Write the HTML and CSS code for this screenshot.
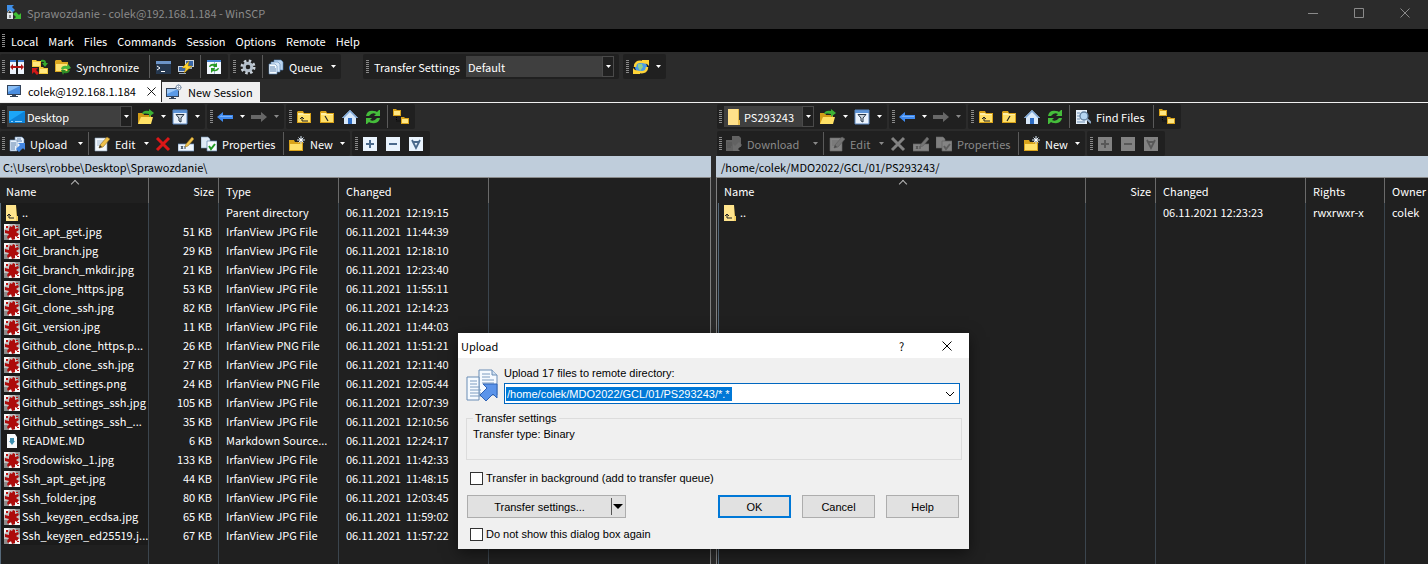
FILE: index.html
```html
<!DOCTYPE html>
<html lang="en">
<head>
<meta charset="utf-8">
<title>Sprawozdanie - colek@192.168.1.184 - WinSCP</title>
<link rel="stylesheet" href="styles.css">
</head>
<body>
<svg class="sprite" aria-hidden="true">
  <symbol id="app" viewBox="0 0 16 16"><path d="M1 1h7L6 3l3 3-3 3-3-3-2 2z" fill="#3f8fe8"/><path d="M15 15H8l2-2-3-3 3-2 3 3 2-2z" fill="#3fbf35"/><path d="M2 9V8q2-3 4 0v1" fill="none" stroke="#ccc"/><path d="M1 9h6v6H1z" fill="#dfe5ea"/><path d="M3.500 11h1v3h-1z" fill="#333"/></symbol>
  <symbol id="compare" viewBox="0 0 16 16"><path d="M1 1h6v14H1zM9 1h6v14H9z" fill="#eef5fd"/><path d="M1 1h6v2H1zM9 1h6v2H9z" fill="#3a76c8"/><path d="M1 8l3-3v2h8V5l3 3-3 3V9H4v2z" fill="#b31616"/></symbol>
  <symbol id="folder" viewBox="0 0 16 16"><path d="M1 3l1-1h5l1 2h7v10H1z" fill="#d9a31a"/><path d="M2 6h12v7H2z" fill="#ffe069"/><path d="M2 4h5l1 1h6v1H2z" fill="#fff0a8"/></symbol>
  <symbol id="syncdirs" viewBox="0 0 16 16"><path d="M0 1h4l1 1h4v6H0z" fill="#f3c93b"/><path d="M1 3h7v4H1z" fill="#ffe77e"/><path d="M7 8h4l1 1h4v6H7z" fill="#f3c93b"/><path d="M8 10h7v4H8z" fill="#ffe77e"/><path d="M9 1q5-1 5 3h2l-3 4-3-4h2q0-2-3-1z" fill="#35a82c"/><path d="M0 9h6L4 11l3 3-2 2-3-3-2 2z" fill="#d01818"/></symbol>
  <symbol id="sync" viewBox="0 0 16 16"><path d="M0 2l1-1h5l1 2h6v10H0z" fill="#dba71f"/><path d="M1 5h11v7H1z" fill="#ffe374"/><path d="M6 10q1-4 6-3l1-2 3 4-4 2v-1q-3-1-4 1z" fill="#49b53c"/><path d="M15 11q-1 4-6 3l-1 2-2-5h5l-1 1q2 1 3-1z" fill="#2c8c27"/></symbol>
  <symbol id="terminal" viewBox="0 0 16 16"><path d="M1 2h15v13H1z" fill="#26384f"/><path d="M1 2h15v3H1z" fill="#6c94c8"/><path d="M2 7l3 2-3 2" fill="none" stroke="#fff"/><path d="M6 12h4v1H6z" fill="#fff"/></symbol>
  <symbol id="putty" viewBox="0 0 16 16"><path d="M7 1h9v7H7zM0 7h8v6H0z" fill="#cbd5df"/><path d="M8 2h7v5H8zM1 8h6v4H1z" fill="#3867aa"/><path d="M1 14h7v1H1zM11 8h3v2h-3z" fill="#9aa8b6"/><path d="M11 2L4 9h4l-2 5 8-7h-4z" fill="#ffd52e" stroke="#a87900" stroke-width=".5"/></symbol>
  <symbol id="swap" viewBox="0 0 16 16"><path d="M1 1h14v14H1z" fill="#f2f8ff"/><path d="M1 1h14v2H1z" fill="#4583cf"/><path d="M8 3h1v12H8z" fill="#9fb5cf"/><path d="M3 8q1-4 6-3l2-1v4H7l1-1q-2-1-4 1zM13 9q-1 4-6 3l-2 2v-5h4l-1 2q2 0 4-2z" fill="#299b24"/></symbol>
  <symbol id="gear" viewBox="0 0 16 16"><circle cx="8" cy="8" r="6" fill="none" stroke="#c9d1d9" stroke-width="3" stroke-dasharray="2.400 2.312"/><circle cx="8" cy="8" r="3.800" fill="none" stroke="#b5c0cb" stroke-width="3"/></symbol>
  <symbol id="queue" viewBox="0 0 16 16"><path d="M6 1h7l2 2v8H6z" fill="#bcd4ee" stroke="#5684b5" stroke-width=".6"/><path d="M3 3h7l2 2v8H3z" fill="#d7e7f8" stroke="#5684b5" stroke-width=".6"/><path d="M1 5h6l2 2v8H1z" fill="#f6fbff" stroke="#5684b5" stroke-width=".6"/><path d="M2 8h5M2 10h6M2 12h6" stroke="#5a82b0"/></symbol>
  <symbol id="globe" viewBox="0 0 16 16"><circle cx="8" cy="8" r="6" fill="#4b9be6"/><path d="M5 5l4 0 1 3-3 4-2-4z" fill="#8fd08a"/><path d="M2 8Q2 2 9 3" fill="none" stroke="#ffd437" stroke-width="2.500"/><path d="M9 1h7v6l-2-2-5-1z" fill="#ffd437"/><path d="M14 8q0 6-7 5" fill="none" stroke="#ffd437" stroke-width="2.500"/><path d="M7 15H0V9l2 2 5 1z" fill="#ffd437"/></symbol>
  <symbol id="monitor" viewBox="0 0 16 16"><path d="M1 2h14v10H1z" fill="#33435a"/><path d="M2 3h12v8H2z" fill="#4b8ee0"/><path d="M2 3h12L2 9z" fill="#8abef5"/><path d="M6 12h4v1h2v1H4v-1h2z" fill="#33435a"/></symbol>
  <symbol id="newsession" viewBox="0 0 16 16"><path d="M0 4h13v9H0z" fill="#33435a"/><path d="M1 5h11v7H1z" fill="#5b9ae6"/><path d="M1 5h11L1 10z" fill="#9cc8f7"/><path d="M5 13h3v1h2v1H3v-1h2z" fill="#33435a"/><circle cx="12.500" cy="3.500" r="2.500" fill="#fff" stroke="#7b8ea5"/><path d="M12.500 0v7M9 3.500h7" stroke="#90a2b8" stroke-width=".7"/></symbol>
  <symbol id="desktop" viewBox="0 0 16 16"><path d="M0 2h16v12H0z" fill="#0d83d8"/><path d="M0 2h16L0 12z" fill="#1ca6f7"/><path d="M2 12.500h2m2 0h7" stroke="#8fd4ff"/></symbol>
  <symbol id="open" viewBox="0 0 16 16"><path d="M0 4h5l1 2h7v9H0z" fill="#d29c17"/><path d="M3 8h12l-2 7H0z" fill="#ffe165"/><path d="M4 5q1-4 7-3V0l5 4-5 4V5Q7 4 4 5z" fill="#3db236"/></symbol>
  <symbol id="filter" viewBox="0 0 16 16"><path d="M1 1h14v14H1z" fill="#e9f2fd"/><path d="M1 1h14v3H1z" fill="#5b93d8"/><path d="M1 1h14v14H1z" fill="none" stroke="#5b87c0"/><path d="M4 5.500h8L9 9v4l-2-1V9z" fill="#cdd6e0" stroke="#273647"/></symbol>
  <symbol id="back" viewBox="0 0 16 16"><path d="M0 8l6-5v3h10v4H6v3z" fill="#3f8af0"/><path d="M2 8l3-2v1h10v1z" fill="#79b2fa"/></symbol>
  <symbol id="forward" viewBox="0 0 16 16"><path d="M16 8l-6-5v3H0v4h10v3z" fill="#999"/></symbol>
  <symbol id="folderup" viewBox="0 0 16 16"><use href="#folder"/><path d="M12 12H6V8m-2 2l2-2 2 2" fill="none" stroke="#222"/></symbol>
  <symbol id="rootback" viewBox="0 0 16 16"><use href="#folder"/><path d="M6 7l3 5" fill="none" stroke="#222" stroke-width="1.200"/></symbol>
  <symbol id="rootslash" viewBox="0 0 16 16"><use href="#folder"/><path d="M9 7l-3 5" fill="none" stroke="#222" stroke-width="1.200"/></symbol>
  <symbol id="home" viewBox="0 0 16 16"><path d="M8 1l8 8h-2v6H2V9H0z" fill="#d9e9fa"/><path d="M8 1l8 8h-2L8 3 2 9H0z" fill="#7fa9d9"/><path d="M6 9h4v6H6z" fill="#2d6cc4"/></symbol>
  <symbol id="refresh" viewBox="0 0 16 16"><path d="M1 7Q2 1 9 2q2 0 3 1l2-2h1v6H9l2-2Q7 3 4 7zM15 9q-1 6-8 5-2 0-3-1l-2 2H1V9h6l-2 2q4 2 7-2z" fill="#45bd3b"/></symbol>
  <symbol id="tree" viewBox="0 0 16 16"><path d="M0 0h3l1 1h4v6H0zM8 8h3l1 1h4v6H8z" fill="#d9a31a"/><path d="M1 2h6v4H1zM9 10h6v4H9z" fill="#ffe783"/><path d="M3.500 8v4H8" fill="none" stroke="#000" stroke-dasharray="1 1"/></symbol>
  <symbol id="upload" viewBox="0 0 16 16"><path d="M6 1h7l2 2v9H6z" fill="#eaf3fd" stroke="#6b8db5" stroke-width=".6"/><path d="M1 4h7v11H1z" fill="#eaf3fd" stroke="#6b8db5" stroke-width=".6"/><path d="M8 3h4M8 5h5M2 7h5M2 9h5M2 11h4M2 13h4" stroke="#5b7fa9"/><path d="M9 7h7v7l-2-2-4 4-3-3 4-4z" fill="#4285df"/></symbol>
  <symbol id="download" viewBox="0 0 16 16"><path d="M6 0h7l2 2v9H6zM0 4h8v11H0z" fill="#888"/><path d="M1 7h5M1 9h5M1 11h4" stroke="#555"/><path d="M7 15V8l2 2 4-4 3 3-4 4 2 2z" fill="#aaa"/></symbol>
  <symbol id="edit" viewBox="0 0 16 16"><path d="M1 2h12v13H1z" fill="#f3f8fd" stroke="#8ca2b9" stroke-width=".6"/><path d="M3 5h7M3 7h6M3 9h5" stroke="#a9bcd0"/><path d="M5 12l1-3 7-8 3 2-7 8z" fill="#f0c24b" stroke="#8d6a1c" stroke-width=".6"/><path d="M5 12l1-3 2 2z" fill="#333"/></symbol>
  <symbol id="delete" viewBox="0 0 16 16"><path d="M2 2l12 12M14 2L2 14" stroke="#dc1717" stroke-width="3"/></symbol>
  <symbol id="rename" viewBox="0 0 16 16"><path d="M0 8h16v7H0z" fill="#eef5fc" stroke="#6d94c0" stroke-width=".7"/><path d="M3 10l2 3m0-3l-2 3M7 10v3" stroke="#345"/><path d="M7 11l1-3 6-7 2 2-6 7z" fill="#f0c24b" stroke="#8d6a1c" stroke-width=".5"/></symbol>
  <symbol id="props" viewBox="0 0 16 16"><path d="M0 1h7l2 2v9H0z" fill="#dfeaf6" stroke="#7490b0" stroke-width=".6"/><path d="M6 5h10v10H6z" fill="#f6fafe" stroke="#5f83ad" stroke-width=".7"/><path d="M8 10l2 3 4-5" fill="none" stroke="#1f9a22" stroke-width="2"/></symbol>
  <symbol id="newfolder" viewBox="0 0 16 16"><path d="M0 4h5l1 2h8v9H0z" fill="#d9a31a"/><path d="M1 8h12v6H1z" fill="#ffe069"/><path d="M12 0v8M8 4h8M9.500 1.500l5 5m0-5l-5 5" stroke="#d8e7f7"/><circle cx="12" cy="4" r="1.500" fill="#fff"/></symbol>
  <symbol id="plus" viewBox="0 0 16 16"><path d="M1 1h14v14H1z" fill="#e9f3fd"/><path d="M8 4v8M4 8h8" stroke="#4b6a8c" stroke-width="2"/></symbol>
  <symbol id="minus" viewBox="0 0 16 16"><path d="M1 1h14v14H1z" fill="#e9f3fd"/><path d="M4 8h8" stroke="#4b6a8c" stroke-width="2"/></symbol>
  <symbol id="all" viewBox="0 0 16 16"><path d="M1 1h14v14H1z" fill="#e9f3fd"/><path d="M4 4l4 8 4-8M5 6h6" fill="none" stroke="#4b6a8c" stroke-width="1.800"/></symbol>
  <symbol id="find" viewBox="0 0 16 16"><path d="M1 1h11v14H1z" fill="#e6f0fa"/><path d="M2 4h3M2 7h3M2 10h3M2 13h8" stroke="#6f8fb2"/><circle cx="9" cy="7" r="4" fill="#b5d6f2" stroke="#5f7f9f" stroke-width="1.300"/><path d="M12 10l4 4" stroke="#8fa9c4" stroke-width="2"/></symbol>
  <symbol id="dirup" viewBox="0 0 16 16"><path d="M2 0h10l1 11h1v5H2z" fill="#f5d063"/><path d="M2 0h10v16H2z" fill="#ffe48c"/><path d="M10 13H5V9m-2 2l2-2 2 2" fill="none" stroke="#222"/></symbol>
  <symbol id="dir" viewBox="0 0 16 16"><path d="M2 0h11v11h1v5H2z" fill="#e8bd4d"/><path d="M2 0h10v16H2z" fill="#ffe08a"/></symbol>
  <symbol id="irfan" viewBox="0 0 16 16"><path d="M0 0h16v16H0z" fill="#c4c4c4"/><path d="M0 0h6L0 6zM11 11h5v5h-5zM4 14h4v2H4z" fill="#f6f6f6"/><path d="M11 0h5v7l-2-3zM0 11h4l1 5H0z" fill="#8d8d8d"/><path d="M6 2l2 1 1-2 2 1v3l3-1 1 2-3 2 3 2-2 3-2-1v3l-3 1-1-3-3 2-1-2 2-3-4-1V6l4 1V5z" fill="#ad0b0b"/><path d="M2 2l2 0 0 2-2 0zM13 13h2v1h-2zM12 2h2v1h-2z" fill="#b11"/></symbol>
  <symbol id="md" viewBox="0 0 16 16"><path d="M3 1h8l2 3v11H3z" fill="#f7fafc"/><path d="M6 5h4v3h1l-3 4-3-4h1z" fill="#3d8fb0"/></symbol>
  <symbol id="upload-lg" viewBox="0 0 32 32"><path d="M13 1h13l5 5v20H13z" fill="#f5faff" stroke="#6b8db5"/><path d="M26 1v5h5" fill="#cfe0f2" stroke="#6b8db5"/><path d="M1 8h12v23H1z" fill="#f5faff" stroke="#6b8db5"/><path d="M16 5h8M16 8h8M16 11h12M16 14h12M4 12h7M4 15h7M4 18h10M4 21h11M4 24h11M4 27h11" stroke="#7d9cc0"/><path d="M17 15h14v14l-4-4-7 7-6-6 7-7z" fill="#5b94ea" stroke="#2e62b5"/></symbol>
  <symbol id="x" viewBox="0 0 10 10"><path d="M.5.5l9 9m0-9l-9 9" fill="none" stroke="currentColor"/></symbol>
  <symbol id="min" viewBox="0 0 10 10"><path d="M0 5.500h10" stroke="currentColor"/></symbol>
  <symbol id="max" viewBox="0 0 10 10"><path d="M.5.5h9v9h-9z" fill="none" stroke="currentColor"/></symbol>
  <symbol id="chev" viewBox="0 0 10 10"><path d="M1 3l4 4 4-4" fill="none" stroke="currentColor"/></symbol>
</svg>

<header class="titlebar">
  <svg class="icon"><use href="#app"/></svg>
  <h1 class="titlebar-text">Sprawozdanie - colek@192.168.1.184 - WinSCP</h1>
  <button class="winbtn" aria-label="Minimize"><svg><use href="#min"/></svg></button>
  <button class="winbtn" aria-label="Maximize"><svg><use href="#max"/></svg></button>
  <button class="winbtn" aria-label="Close"><svg><use href="#x"/></svg></button>
</header>

<nav class="menubar">
  <span class="grip"></span>
  <button>Local</button><button>Mark</button><button>Files</button><button>Commands</button><button>Session</button><button>Options</button><button>Remote</button><button>Help</button>
</nav>

<div class="bar bar-main">
  <div class="group">
    <span class="grip"></span>
    <button class="tool" aria-label="Compare"><svg class="icon"><use href="#compare"/></svg></button>
    <button class="tool" aria-label="Synchronize browsing"><svg class="icon"><use href="#syncdirs"/></svg></button>
    <button class="tool w-sync"><svg class="icon"><use href="#sync"/></svg><span>Synchronize</span></button>
    <span class="sep"></span>
    <button class="tool" aria-label="Terminal"><svg class="icon"><use href="#terminal"/></svg></button>
    <button class="tool" aria-label="PuTTY"><svg class="icon"><use href="#putty"/></svg></button>
    <span class="sep"></span>
    <button class="tool" aria-label="Refresh panels"><svg class="icon"><use href="#swap"/></svg></button>
  </div>
  <div class="group">
    <span class="grip"></span>
    <button class="tool" aria-label="Preferences"><svg class="icon"><use href="#gear"/></svg></button>
    <span class="sep"></span>
    <button class="tool w-queue"><svg class="icon"><use href="#queue"/></svg><span>Queue</span><i class="caret"></i></button>
  </div>
  <div class="group group-transfer">
    <span class="grip"></span>
    <label class="bar-label" for="preset">Transfer Settings</label>
    <span class="combo combo-preset"><select id="preset"><option>Default</option></select><i class="combo-arrow"></i></span>
  </div>
  <div class="group">
    <span class="grip"></span>
    <button class="tool" aria-label="Session refresh"><svg class="icon"><use href="#globe"/></svg><i class="caret"></i></button>
  </div>
</div>

<div class="tabs">
  <div class="tab tab-active"><svg class="icon"><use href="#monitor"/></svg><span>colek@192.168.1.184</span><button class="tab-close" aria-label="Close tab"><svg><use href="#x"/></svg></button></div>
  <button class="tab tab-new"><svg class="icon"><use href="#newsession"/></svg><span>New Session</span></button>
</div>

<main class="panes">
  <section class="pane">
    <div class="bars">
      <div class="bar">
        <div class="group">
          <span class="grip"></span>
          <span class="combo combo-local"><svg class="icon"><use href="#desktop"/></svg><select aria-label="Local drive"><option>Desktop</option></select><i class="combo-arrow"></i></span>
          <button class="tool" aria-label="Open directory"><svg class="icon"><use href="#open"/></svg><i class="caret"></i></button>
          <button class="tool" aria-label="Filter"><svg class="icon"><use href="#filter"/></svg><i class="caret"></i></button>
        </div>
        <div class="group">
          <span class="grip"></span>
          <button class="tool" aria-label="Back"><svg class="icon"><use href="#back"/></svg><i class="caret"></i></button>
          <button class="tool off" aria-label="Forward"><svg class="icon"><use href="#forward"/></svg><i class="caret"></i></button>
        </div>
        <div class="group">
          <span class="grip"></span>
          <button class="tool" aria-label="Parent directory"><svg class="icon"><use href="#folderup"/></svg></button>
          <button class="tool" aria-label="Root directory"><svg class="icon"><use href="#rootback"/></svg></button>
          <button class="tool" aria-label="Home directory"><svg class="icon"><use href="#home"/></svg></button>
          <button class="tool" aria-label="Refresh"><svg class="icon"><use href="#refresh"/></svg></button>
          <span class="sep"></span>
          <button class="tool" aria-label="Tree"><svg class="icon"><use href="#tree"/></svg></button>
        </div>
      </div>
      <div class="bar">
        <div class="group">
          <span class="grip"></span>
          <button class="tool w-upload"><svg class="icon"><use href="#upload"/></svg><span>Upload</span><i class="caret"></i></button>
          <span class="sep"></span>
          <button class="tool w-edit"><svg class="icon"><use href="#edit"/></svg><span>Edit</span><i class="caret"></i></button>
          <button class="tool" aria-label="Delete"><svg class="icon"><use href="#delete"/></svg></button>
          <button class="tool" aria-label="Rename"><svg class="icon"><use href="#rename"/></svg></button>
          <button class="tool w-props"><svg class="icon"><use href="#props"/></svg><span>Properties</span></button>
          <span class="sep"></span>
          <button class="tool w-new"><svg class="icon"><use href="#newfolder"/></svg><span>New</span><i class="caret"></i></button>
        </div>
        <div class="group">
          <span class="grip"></span>
          <button class="tool" aria-label="Select"><svg class="icon"><use href="#plus"/></svg></button>
          <button class="tool" aria-label="Unselect"><svg class="icon"><use href="#minus"/></svg></button>
          <button class="tool" aria-label="Select all"><svg class="icon"><use href="#all"/></svg></button>
        </div>
      </div>
    </div>
    <div class="path">C:\Users\robbe\Desktop\Sprawozdanie\</div>
    <div class="list">
      <table class="files files-local">
        <colgroup><col class="c-name"><col class="c-size"><col class="c-type"><col class="c-date"><col></colgroup>
        <thead><tr><th class="sorted">Name</th><th class="num">Size</th><th>Type</th><th>Changed</th><th class="rest"></th></tr></thead>
        <tbody>
          <tr><td><svg class="icon"><use href="#dirup"/></svg>..</td><td></td><td>Parent directory</td><td>06.11.2021  12:19:15</td><td></td></tr>
          <tr><td><svg class="icon"><use href="#irfan"/></svg>Git_apt_get.jpg</td><td>51 KB</td><td>IrfanView JPG File</td><td>06.11.2021  11:44:39</td><td></td></tr>
          <tr><td><svg class="icon"><use href="#irfan"/></svg>Git_branch.jpg</td><td>29 KB</td><td>IrfanView JPG File</td><td>06.11.2021  12:18:10</td><td></td></tr>
          <tr><td><svg class="icon"><use href="#irfan"/></svg>Git_branch_mkdir.jpg</td><td>21 KB</td><td>IrfanView JPG File</td><td>06.11.2021  12:23:40</td><td></td></tr>
          <tr><td><svg class="icon"><use href="#irfan"/></svg>Git_clone_https.jpg</td><td>53 KB</td><td>IrfanView JPG File</td><td>06.11.2021  11:55:11</td><td></td></tr>
          <tr><td><svg class="icon"><use href="#irfan"/></svg>Git_clone_ssh.jpg</td><td>82 KB</td><td>IrfanView JPG File</td><td>06.11.2021  12:14:23</td><td></td></tr>
          <tr><td><svg class="icon"><use href="#irfan"/></svg>Git_version.jpg</td><td>11 KB</td><td>IrfanView JPG File</td><td>06.11.2021  11:44:03</td><td></td></tr>
          <tr><td><svg class="icon"><use href="#irfan"/></svg>Github_clone_https.p...</td><td>26 KB</td><td>IrfanView PNG File</td><td>06.11.2021  11:51:21</td><td></td></tr>
          <tr><td><svg class="icon"><use href="#irfan"/></svg>Github_clone_ssh.jpg</td><td>27 KB</td><td>IrfanView JPG File</td><td>06.11.2021  12:11:40</td><td></td></tr>
          <tr><td><svg class="icon"><use href="#irfan"/></svg>Github_settings.png</td><td>24 KB</td><td>IrfanView PNG File</td><td>06.11.2021  12:05:44</td><td></td></tr>
          <tr><td><svg class="icon"><use href="#irfan"/></svg>Github_settings_ssh.jpg</td><td>105 KB</td><td>IrfanView JPG File</td><td>06.11.2021  12:07:39</td><td></td></tr>
          <tr><td><svg class="icon"><use href="#irfan"/></svg>Github_settings_ssh_...</td><td>35 KB</td><td>IrfanView JPG File</td><td>06.11.2021  12:10:56</td><td></td></tr>
          <tr><td><svg class="icon"><use href="#md"/></svg>README.MD</td><td>6 KB</td><td>Markdown Source...</td><td>06.11.2021  12:24:17</td><td></td></tr>
          <tr><td><svg class="icon"><use href="#irfan"/></svg>Srodowisko_1.jpg</td><td>133 KB</td><td>IrfanView JPG File</td><td>06.11.2021  11:42:33</td><td></td></tr>
          <tr><td><svg class="icon"><use href="#irfan"/></svg>Ssh_apt_get.jpg</td><td>44 KB</td><td>IrfanView JPG File</td><td>06.11.2021  11:48:15</td><td></td></tr>
          <tr><td><svg class="icon"><use href="#irfan"/></svg>Ssh_folder.jpg</td><td>80 KB</td><td>IrfanView JPG File</td><td>06.11.2021  12:03:45</td><td></td></tr>
          <tr><td><svg class="icon"><use href="#irfan"/></svg>Ssh_keygen_ecdsa.jpg</td><td>65 KB</td><td>IrfanView JPG File</td><td>06.11.2021  11:59:02</td><td></td></tr>
          <tr><td><svg class="icon"><use href="#irfan"/></svg>Ssh_keygen_ed25519.j...</td><td>67 KB</td><td>IrfanView JPG File</td><td>06.11.2021  11:57:22</td><td></td></tr>
          <tr class="filler"><td></td><td></td><td></td><td></td><td></td></tr>
        </tbody>
      </table>
    </div>
  </section>

  <section class="pane">
    <div class="bars">
      <div class="bar">
        <div class="group">
          <span class="grip"></span>
          <span class="combo combo-remote"><svg class="icon"><use href="#dir"/></svg><select aria-label="Remote directory"><option>PS293243</option></select><i class="combo-arrow"></i></span>
          <button class="tool" aria-label="Open directory"><svg class="icon"><use href="#open"/></svg><i class="caret"></i></button>
          <button class="tool" aria-label="Filter"><svg class="icon"><use href="#filter"/></svg><i class="caret"></i></button>
        </div>
        <div class="group">
          <span class="grip"></span>
          <button class="tool" aria-label="Back"><svg class="icon"><use href="#back"/></svg><i class="caret"></i></button>
          <button class="tool off" aria-label="Forward"><svg class="icon"><use href="#forward"/></svg><i class="caret"></i></button>
        </div>
        <div class="group">
          <span class="grip"></span>
          <button class="tool" aria-label="Parent directory"><svg class="icon"><use href="#folderup"/></svg></button>
          <button class="tool" aria-label="Root directory"><svg class="icon"><use href="#rootslash"/></svg></button>
          <button class="tool" aria-label="Home directory"><svg class="icon"><use href="#home"/></svg></button>
          <button class="tool" aria-label="Refresh"><svg class="icon"><use href="#refresh"/></svg></button>
          <span class="sep"></span>
          <button class="tool w-find"><svg class="icon"><use href="#find"/></svg><span>Find Files</span></button>
          <span class="sep"></span>
          <button class="tool" aria-label="Tree"><svg class="icon"><use href="#tree"/></svg></button>
        </div>
      </div>
      <div class="bar">
        <div class="group">
          <span class="grip"></span>
          <button class="tool off w-download"><svg class="icon"><use href="#download"/></svg><span>Download</span><i class="caret"></i></button>
          <span class="sep"></span>
          <button class="tool off w-edit"><svg class="icon"><use href="#edit"/></svg><span>Edit</span><i class="caret"></i></button>
          <button class="tool off" aria-label="Delete"><svg class="icon icon-delete-off"><use href="#delete"/></svg></button>
          <button class="tool off" aria-label="Rename"><svg class="icon"><use href="#rename"/></svg></button>
          <button class="tool off w-props"><svg class="icon"><use href="#props"/></svg><span>Properties</span></button>
          <span class="sep"></span>
          <button class="tool w-new"><svg class="icon"><use href="#newfolder"/></svg><span>New</span><i class="caret"></i></button>
        </div>
        <div class="group">
          <span class="grip"></span>
          <button class="tool off" aria-label="Select"><svg class="icon"><use href="#plus"/></svg></button>
          <button class="tool off" aria-label="Unselect"><svg class="icon"><use href="#minus"/></svg></button>
          <button class="tool off" aria-label="Select all"><svg class="icon"><use href="#all"/></svg></button>
        </div>
      </div>
    </div>
    <div class="path">/home/colek/MDO2022/GCL/01/PS293243/</div>
    <div class="list">
      <table class="files">
        <colgroup><col class="c-name-remote"><col class="c-size"><col class="c-date"><col class="c-rights"><col></colgroup>
        <thead><tr><th class="sorted">Name</th><th class="num">Size</th><th>Changed</th><th>Rights</th><th class="rest">Owner</th></tr></thead>
        <tbody>
          <tr><td><svg class="icon"><use href="#dirup"/></svg>..</td><td></td><td>06.11.2021 12:23:23</td><td>rwxrwxr-x</td><td>colek</td></tr>
          <tr class="filler"><td></td><td></td><td></td><td></td><td></td></tr>
        </tbody>
      </table>
    </div>
  </section>
</main>

<div class="dialog" role="dialog" aria-labelledby="dlg-title">
  <div class="dialog-title"><h2 id="dlg-title">Upload</h2><button class="dialog-btn" aria-label="Context help">?</button><button class="dialog-btn" aria-label="Close"><svg><use href="#x"/></svg></button></div>
  <form class="dialog-body">
    <div class="target">
      <svg class="icon-lg"><use href="#upload-lg"/></svg>
      <div class="target-field">
        <label for="target">Upload 17 files to remote directory:</label>
        <div class="editbox"><input id="target" type="text" value="/home/colek/MDO2022/GCL/01/PS293243/*.*"><button type="button" aria-label="History"><svg><use href="#chev"/></svg></button></div>
      </div>
    </div>
    <fieldset class="settings"><legend>Transfer settings</legend>Transfer type: Binary</fieldset>
    <label class="check"><input type="checkbox">Transfer in background (add to transfer queue)</label>
    <div class="actions">
      <button type="button" class="btn btn-split"><span>Transfer settings...</span><i class="split-arrow"></i></button>
      <button type="button" class="btn btn-default">OK</button>
      <button type="button" class="btn">Cancel</button>
      <button type="button" class="btn">Help</button>
    </div>
    <label class="check"><input type="checkbox">Do not show this dialog box again</label>
  </form>
</div>
</body>
</html>
```
FILE: styles.css
```css
* { box-sizing: border-box; }

body {
  margin: 0;
  height: 100vh;
  display: flex;
  flex-direction: column;
  overflow: hidden;
  position: relative;
  background: #2b2b2b;
  color: #fff;
  font: 11px/16px "Noto Sans CJK SC", "Noto Sans", sans-serif;
}

button, select, input { font: inherit; color: inherit; }
button { background: none; border: 0; padding: 0; }
h1, h2 { margin: 0; font: inherit; }
.sprite { display: none; }
.icon { width: 16px; height: 16px; flex: none; }

/* Title bar */
.titlebar { height: 29px; flex: none; display: flex; align-items: flex-start; color: #8a8a8a; padding-left: 6px; }
.titlebar .icon { margin-top: 4px; }
.titlebar-text { flex: 1; padding: 5px; }
.winbtn { width: 46px; height: 25px; }
.winbtn svg, .dialog-btn svg { width: 10px; height: 10px; display: block; margin: auto; }

/* Menu */
.menubar { height: 23px; flex: none; display: flex; align-items: center; background: #000; }
.menubar button { padding: 0 5px; }

/* Toolbars */
.bar { display: flex; gap: 2px; height: 25px; }
.bar-main { flex: none; height: 28px; padding: 2px 0 1px; }
.bars { display: flex; flex-direction: column; gap: 2px; padding: 1px 0 0; }
.pane + .pane .bars { padding-left: 1px; }
.group { display: flex; align-items: center; background: #202020; border-radius: 2px; padding-right: 2px; }
.group-transfer { margin: 0 2px 0 20px; }
.grip {
  width: 3px;
  height: 14px;
  margin: 0 1px 0 2px;
  flex: none;
  background: repeating-linear-gradient(#8a8a8a 0 1px, transparent 1px 2px);
}
.group + .group .grip { margin-left: 3px; }
.sep { width: 1px; height: 23px; margin: 0 2px; background: #5a5a5a; }
.tool { display: flex; align-items: center; height: 23px; padding-left: 3px; white-space: nowrap; }
.tool .icon { margin-right: 4px; }
.tool span { padding-left: 1px; flex: 1; text-align: left; }
.caret, .combo-arrow::after {
  width: 5px;
  height: 3px;
  margin: 0 3px;
  flex: none;
  background: currentColor;
  clip-path: polygon(0 0, 100% 0, 50% 100%);
}
.off { color: #8a8a8a; }
.off .icon { filter: grayscale(1) contrast(.4) brightness(.75); }
.off .icon-delete-off { filter: grayscale(1) brightness(2); }

.w-sync { width: 95px; }
.w-queue { width: 74px; }
.w-upload { width: 80px; }
.w-download { width: 98px; }
.w-edit { width: 61px; }
.w-props { width: 83px; }
.w-new { width: 62px; }
.w-find { width: 79px; }

.bar-label { padding: 0 5px 0 4px; }
.combo { display: flex; align-items: center; height: 21px; background: #3f3f3f; padding-left: 2px; margin: 0 3px 0 1px; }
.combo select {
  flex: 1;
  min-width: 0;
  height: 21px;
  padding: 0 0 0 2px;
  border: 0;
  background: none;
  appearance: none;
}
.combo-preset select { padding: 0; }
.combo-arrow { display: flex; align-items: center; width: 12px; height: 21px; background: #202020; border: 1px solid #4a4a4a; }
.combo-arrow::after { content: ""; }
.combo-preset { width: 148px; }
.combo-local { width: 125px; }
.combo-remote { width: 90px; }

/* Session tabs */
.tabs { height: 23px; flex: none; display: flex; align-items: flex-end; border-bottom: 1px solid #f0f0f0; color: #000; gap: 1px; }
.tab { display: flex; align-items: center; height: 20px; }
.tab-active { width: 161px; height: 22px; padding-left: 6px; background: #fff; gap: 6px; }
.tab-active span { flex: 1; }
.tab-close { width: 25px; height: 20px; }
.tab-close svg { width: 9px; height: 9px; display: block; margin: auto; }
.tab-new { width: 98px; padding-left: 4px; background: #f0f0f0; gap: 6px; }

/* Panes */
.panes { flex: 1; min-height: 0; display: grid; grid-template-columns: calc(50% - 3px) minmax(0, 1fr); column-gap: 5px; }
.pane { display: flex; flex-direction: column; min-width: 0; min-height: 0; }
.path { height: 22px; flex: none; padding: 3px 3px 0; background: #bfcddb; color: #000; border-bottom: 1px solid #8a8a8a; }
.pane + .pane .path { padding-left: 5px; }
.list { flex: 1; min-height: 0; background: #202020; border-right: 1px solid #808080; }
.pane + .pane .list { border-right: 0; border-left: 1px solid #808080; padding-left: 1px; }
.files { width: 100%; height: 100%; table-layout: fixed; border-collapse: separate; border-spacing: 0; }
.files th {
  position: relative;
  height: 25px;
  padding: 0 7px;
  border-right: 1px solid #6a6a6a;
  font-weight: 400;
  text-align: left;
}
.files th:first-child { padding-left: 6px; }
.files th.num { text-align: right; padding-right: 4px; }
.files th.rest { border-right: 0; }
.sorted::before {
  content: "";
  position: absolute;
  top: 3px;
  left: calc(50% - 2px);
  width: 5px;
  height: 5px;
  border: solid #b5b5b5;
  border-width: 1px 0 0 1px;
  transform: rotate(45deg);
}
.files td {
  height: 19px;
  padding: 0 6px 0 7px;
  border-right: 1px solid #3b454e;
  line-height: 19px;
  white-space: pre;
  overflow: hidden;
}
.files td:first-child { padding: 0 0 0 3px; border-left: 1px solid #56697a; }
.files td:last-child { border-right: 0; }
.files td .icon { display: inline-block; vertical-align: middle; margin: -2px 2px 0 0; }
.files-local td:first-child { background: #1b1b1b; }
.files-local td:nth-child(2) { text-align: right; }
.files .filler td { height: auto; background: none; }
.c-name { width: 149px; }
.c-name-remote { width: 368px; }
.c-size { width: 70px; }
.c-type { width: 120px; }
.c-date { width: 150px; }
.c-rights { width: 79px; }

/* Upload dialog */
.dialog {
  position: absolute;
  top: 333px;
  left: calc(50% - 256px);
  width: 511px;
  background: #f0f0f0;
  color: #000;
  box-shadow: 0 4px 14px rgba(0, 0, 0, .5);
}
.dialog-title { display: flex; align-items: center; height: 25px; padding-left: 3px; background: #fff; }
.dialog-title h2 { flex: 1; }
.dialog-btn { width: 45px; height: 24px; }
.dialog-body { padding: 7px 7px 7px 8px; font-family: "Liberation Sans", Arial, sans-serif; }
.target { display: flex; align-items: center; gap: 6px; padding-right: 2px; }
.icon-lg { width: 32px; height: 32px; }
.target-field { flex: 1; }
.target-field label { display: block; height: 18px; }
.editbox { display: flex; justify-content: space-between; align-items: center; height: 21px; padding: 0 1px; border: 1px solid #0067c0; background: #fff; }
.editbox input { width: 226px; height: 14px; padding: 0 1px; border: 0; background: #0078d7; color: #fff; outline: 0; }
.editbox button { width: 16px; height: 16px; }
.editbox svg { width: 10px; height: 10px; display: block; margin: auto; }
.settings { margin: 6px 0 10px; height: 50px; padding: 0 6px; border: 1px solid #dcdcdc; }
.settings legend { padding: 0 2px; }
.check { display: flex; align-items: center; gap: 3px; padding-left: 4px; height: 16px; }
.check input { appearance: none; width: 13px; height: 13px; margin: 0; border: 1px solid #333; background: #fff; }
.actions { display: flex; gap: 11px; margin: 9px 3px 8px 1px; }
.btn { width: 73px; height: 23px; background: #e1e1e1; border: 1px solid #adadad; text-align: center; }
.btn-default { border: 2px solid #0078d7; }
.btn-split { display: flex; align-items: center; width: 159px; margin-right: auto; }
.btn-split span { flex: 1; }
.split-arrow { display: flex; align-items: center; width: 14px; height: 17px; border-left: 1px solid #555; }
.split-arrow::after { content: ""; width: 10px; height: 5px; margin-left: 1px; background: #000; clip-path: polygon(0 0, 100% 0, 50% 100%); }
```
